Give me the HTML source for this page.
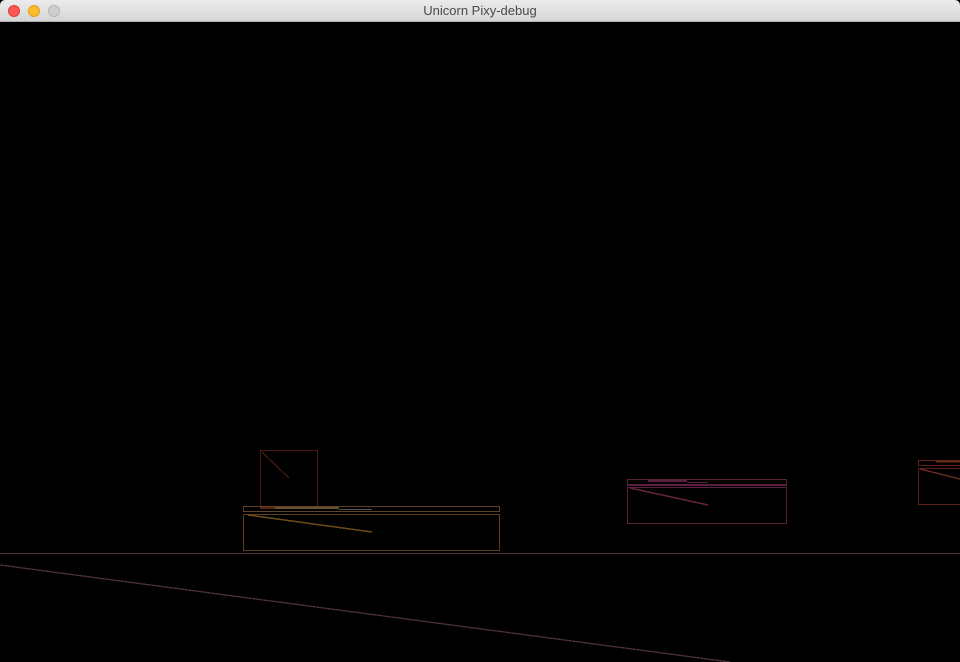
<!DOCTYPE html>
<html><head><meta charset="utf-8"><style>
html,body{margin:0;padding:0;width:960px;height:662px;overflow:hidden;background:#000}
.bar{position:absolute;left:0;top:0;width:960px;height:22px;background:linear-gradient(#ececec,#d6d6d6);border-bottom:1px solid #b0b0b0;box-sizing:border-box;border-radius:5px 5px 0 0}
.t{position:absolute;left:0;right:0;top:3px;text-align:center;font:13px "Liberation Sans",sans-serif;color:#4a4a4a}
.d{position:absolute;top:5px;width:12px;height:12px;border-radius:50%}
svg{position:absolute;left:0;top:0}
</style></head><body>
<div class="bar"><div class="d" style="left:8px;background:#fc5753;border:0.5px solid #de3e3a;box-sizing:border-box"></div><div class="d" style="left:28px;background:#fdbc2e;border:0.5px solid #de9f1a;box-sizing:border-box"></div><div class="d" style="left:48px;background:#cfcfcf;border:0.5px solid #b5b5b5;box-sizing:border-box"></div><div class="t">Unicorn Pixy-debug</div></div>
<svg width="960" height="662" viewBox="0 0 960 662" shape-rendering="crispEdges">
<g fill="none" stroke-width="1">
<rect x="260.5" y="450.5" width="57" height="57" stroke="#4a1a10"/>
<line x1="262" y1="452" x2="289" y2="478" stroke="#5a2010"/>
<rect x="243.5" y="506.5" width="256" height="5" stroke="#5a4328"/>
<line x1="260" y1="508" x2="275" y2="508" stroke="#5a2010" stroke-width="2"/>
<line x1="275" y1="508" x2="339" y2="508" stroke="#6a5030" stroke-width="2"/>
<line x1="339" y1="509.5" x2="372" y2="509.5" stroke="#5a5050"/>
<rect x="243.5" y="514.5" width="256" height="36" stroke="#5a4018"/>
<line x1="248" y1="515" x2="372" y2="532" stroke="#6a4a18" stroke-width="1.5"/>
<line x1="0" y1="553.5" x2="960" y2="553.5" stroke="#4a3434" stroke-width="1.3"/>
<line x1="0" y1="565" x2="730" y2="662" stroke="#4a3030" stroke-width="1.3"/>
<rect x="627.5" y="479.5" width="159" height="6" stroke="#5a2040"/>
<line x1="648" y1="481" x2="687" y2="481" stroke="#5a2040" stroke-width="2"/>
<line x1="687" y1="482.5" x2="708" y2="482.5" stroke="#5a2040"/>
<line x1="627" y1="485" x2="787" y2="485" stroke="#5a2040" stroke-width="2"/>
<rect x="627.5" y="487.5" width="159" height="36" stroke="#5a2040"/>
<line x1="630" y1="488" x2="708" y2="505" stroke="#6a2040" stroke-width="1.5"/>
<rect x="918.5" y="460.5" width="50" height="5" stroke="#5a2018"/>
<line x1="936" y1="461.5" x2="960" y2="461.5" stroke="#6a2818" stroke-width="2"/>
<rect x="918.5" y="468.5" width="50" height="36" stroke="#5a2018"/>
<line x1="920" y1="469" x2="960" y2="479" stroke="#6a2820" stroke-width="1.5"/>
</g></svg>
</body></html>
